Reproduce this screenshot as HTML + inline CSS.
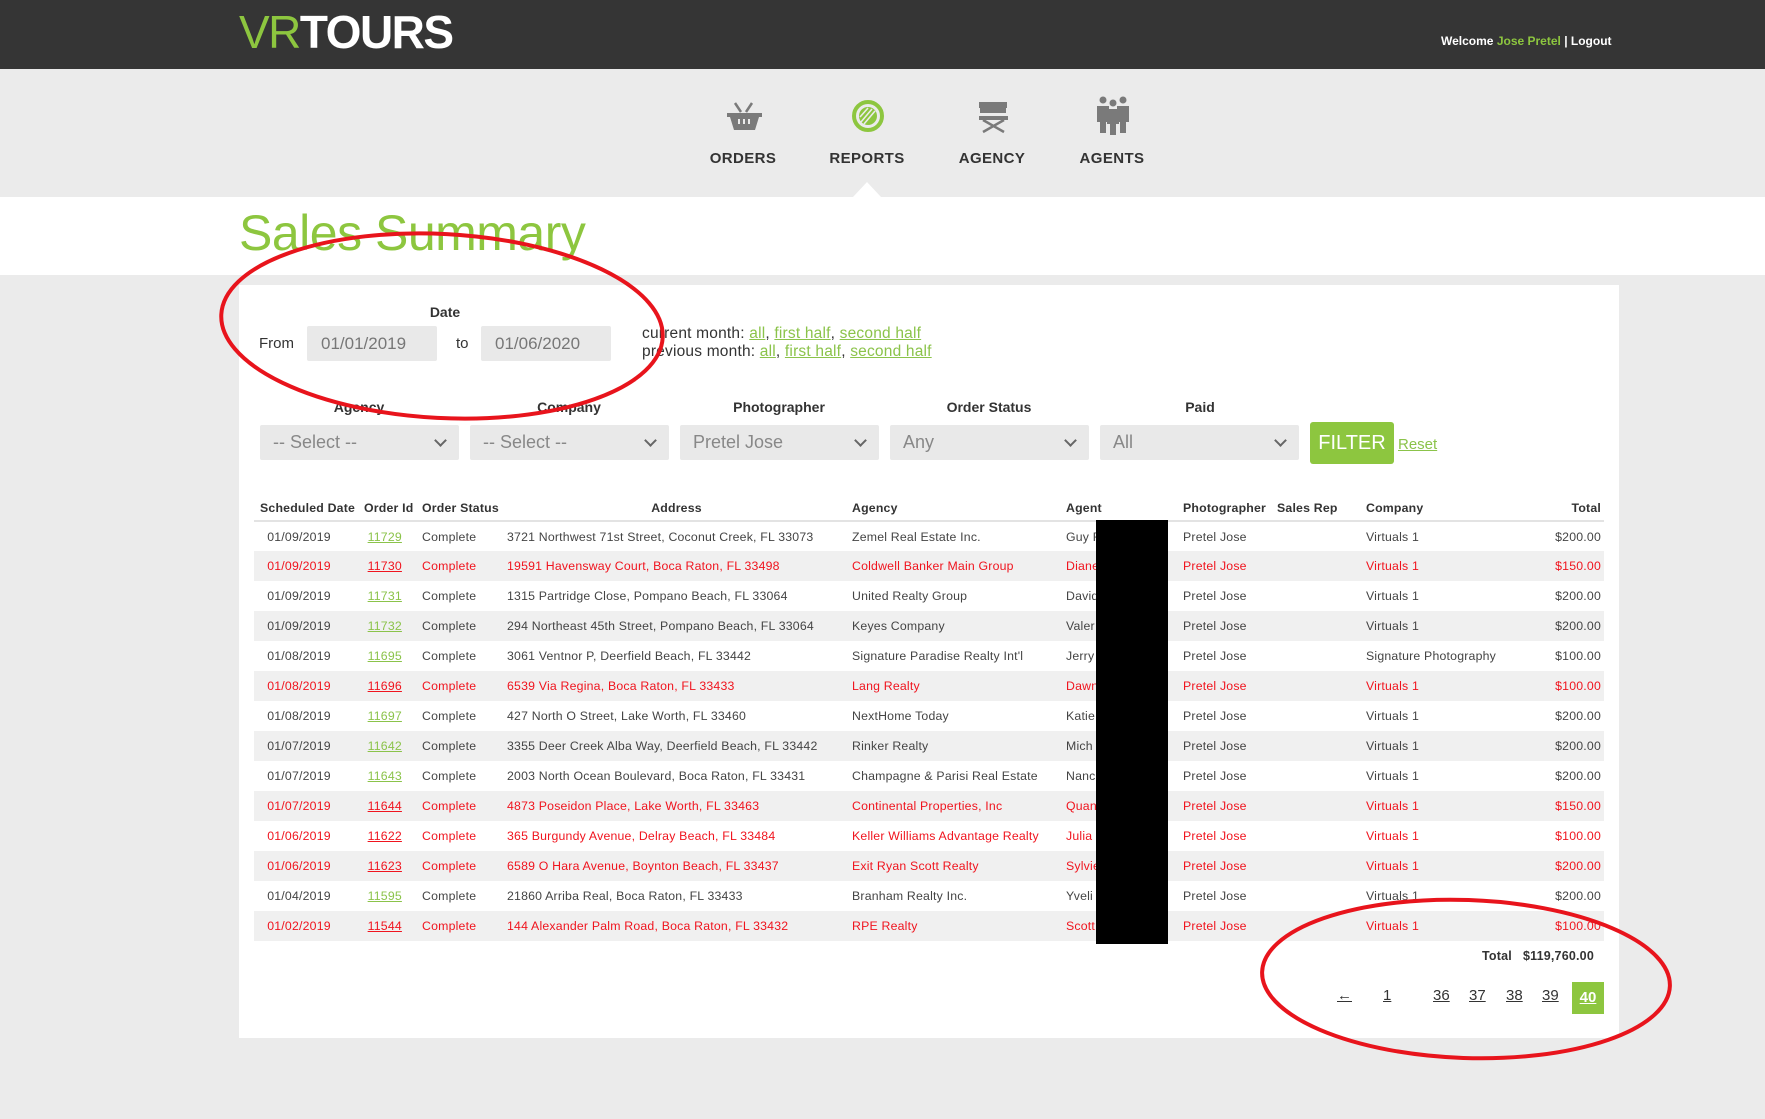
<!DOCTYPE html>
<html><head><meta charset="utf-8"><style>
*{margin:0;padding:0;box-sizing:border-box}
body{width:1765px;height:1119px;background:#ebebeb;font-family:"Liberation Sans",sans-serif;position:relative;overflow:hidden;color:#333}
.a{position:absolute;white-space:nowrap}
#hdr{position:absolute;left:0;top:0;width:1765px;height:69px;background:#353535}
.nav{position:absolute;top:150px;font-size:15px;font-weight:bold;letter-spacing:0.4px;color:#333;transform:translateX(-50%)}
.lbl{font-size:14px;font-weight:bold;color:#333;transform:translateX(-50%)}
.inp{position:absolute;background:#e9e9e9;border-radius:2px;color:#777;font-size:17px;padding-left:14px;line-height:35px}
.sel{position:absolute;top:425px;height:35px;width:199px;background:#e9e9e9;border-radius:2px;color:#888;font-size:18px;padding-left:13px;line-height:35px}
.sel:after{content:"";position:absolute;right:14px;top:11px;width:7px;height:7px;border-right:2px solid #666;border-bottom:2px solid #666;transform:rotate(45deg)}
.g{color:#8bc34a;text-decoration:underline}
table{position:absolute;left:254px;top:498px;width:1350px;border-collapse:collapse;font-size:12.3px;letter-spacing:0.2px}
th{font-weight:bold;text-align:left;height:23px;border-bottom:2px solid #e3e3e3;padding:0 0 2px 6px;font-size:12.3px;color:#333}
td{height:30px;padding:0 0 0 6px;color:#444;white-space:nowrap}
tr:nth-child(odd) td{background:#f0f0f0}
tr.r td{color:#f0141e}
td a{color:#8bc34a;text-decoration:underline}
tr.r td a{color:#f0141e}
.pg{position:absolute;top:987px;font-size:15px;color:#333;text-decoration:underline}
</style></head><body>
<div id="hdr"></div>
<div class="a" style="left:239px;top:5px;font-size:46px;line-height:54px;letter-spacing:-1.5px"><span style="color:#8dc63f">VR</span><span style="color:#fff;font-weight:bold">TOURS</span></div>
<div class="a" style="left:1441px;top:34px;font-size:12px;font-weight:bold;color:#fff">Welcome <span style="color:#8dc63f">Jose Pretel</span> | Logout</div>

<svg class="a" style="left:720px;top:95px" width="430" height="42" viewBox="720 95 430 42">
 <g fill="#7a7a7a">
  <path d="M735 103 L741 112 M752 103 L746 112" stroke="#7a7a7a" stroke-width="2.5" fill="none"/>
  <path d="M727 113 H762 V117 H759 L755 130 H734 L730 117 H727 Z"/>
  <rect x="738" y="119" width="2" height="5" fill="#ebebeb"/><rect x="743" y="119" width="2" height="5" fill="#ebebeb"/><rect x="748" y="119" width="2" height="5" fill="#ebebeb"/>
 </g>
 <circle cx="868" cy="116" r="14" fill="none" stroke="#8dc63f" stroke-width="4"/>
 <circle cx="868" cy="116" r="9" fill="#8dc63f"/>
 <path d="M861 122 L872 109 M864 124 L875 111 M860 117 L868 108" stroke="#ebebeb" stroke-width="1.6"/>
 <g fill="#7a7a7a">
  <rect x="980" y="102" width="26" height="11"/><rect x="979" y="102" width="2" height="6"/><rect x="1005" y="102" width="2" height="6"/>
  <rect x="979" y="116" width="29" height="4"/>
  <path d="M983 132 L1004 120 M983 120 L1004 132" stroke="#7a7a7a" stroke-width="2.5"/>
 </g>
 <g fill="#7a7a7a">
  <circle cx="1103" cy="100" r="3.5"/><circle cx="1113" cy="103" r="3.5"/><circle cx="1123" cy="100" r="3.5"/>
  <path d="M1097 106 H1109 V122 H1106 V133 H1100 V122 H1097 Z"/>
  <path d="M1117 106 H1129 V122 H1126 V133 H1120 V122 H1117 Z"/>
  <path d="M1107 109 H1119 V124 H1116 V135 H1110 V124 H1107 Z"/>
 </g>
</svg>
<div class="a nav" style="left:743px">ORDERS</div>
<div class="a nav" style="left:867px">REPORTS</div>
<div class="a nav" style="left:992px">AGENCY</div>
<div class="a nav" style="left:1112px">AGENTS</div>

<div class="a" style="left:0;top:197px;width:1765px;height:78px;background:#fff"></div>
<div class="a" style="left:853px;top:182px;width:0;height:0;border-left:14px solid transparent;border-right:14px solid transparent;border-bottom:15px solid #fff"></div>
<div class="a" style="left:239px;top:204px;font-size:50px;line-height:58px;color:#8dc63f;letter-spacing:-0.5px">Sales Summary</div>

<div class="a" style="left:239px;top:285px;width:1380px;height:753px;background:#fff"></div>

<div class="a lbl" style="left:445px;top:304px">Date</div>
<div class="a" style="left:259px;top:335px;font-size:15px">From</div>
<div class="inp" style="left:307px;top:326px;width:130px;height:35px">01/01/2019</div>
<div class="a" style="left:456px;top:335px;font-size:15px">to</div>
<div class="inp" style="left:481px;top:326px;width:130px;height:35px">01/06/2020</div>
<div class="a" style="left:642px;top:325px;font-size:15.5px;line-height:18px;color:#333;letter-spacing:0.2px">current month: <span class="g">all</span>, <span class="g">first half</span>, <span class="g">second half</span><br>previous month: <span class="g">all</span>, <span class="g">first half</span>, <span class="g">second half</span></div>

<div class="a lbl" style="left:359px;top:399px">Agency</div>
<div class="a lbl" style="left:569px;top:399px">Company</div>
<div class="a lbl" style="left:779px;top:399px">Photographer</div>
<div class="a lbl" style="left:989px;top:399px">Order Status</div>
<div class="a lbl" style="left:1200px;top:399px">Paid</div>
<div class="sel" style="left:260px">-- Select --</div>
<div class="sel" style="left:470px">-- Select --</div>
<div class="sel" style="left:680px">Pretel Jose</div>
<div class="sel" style="left:890px">Any</div>
<div class="sel" style="left:1100px">All</div>
<div class="a" style="left:1310px;top:422px;width:84px;height:42px;background:#8dc63f;border-radius:3px;color:#fff;font-size:20px;line-height:42px;text-align:center">FILTER</div>
<div class="a g" style="left:1398px;top:436px;font-size:15px">Reset</div>

<table>
<tr style="background:none"><th style="width:104px;background:#fff">Scheduled Date</th><th style="width:58px;background:#fff">Order Id</th><th style="width:85px;background:#fff">Order Status</th><th style="width:345px;text-align:center;background:#fff">Address</th><th style="width:214px;background:#fff">Agency</th><th style="width:117px;background:#fff">Agent</th><th style="width:94px;background:#fff">Photographer</th><th style="width:89px;background:#fff">Sales Rep</th><th style="width:170px;background:#fff">Company</th><th style="text-align:right;padding-right:3px;background:#fff">Total</th></tr>
<tr><td>&nbsp;&nbsp;01/09/2019</td><td>&nbsp;<a>11729</a></td><td>Complete</td><td>3721 Northwest 71st Street, Coconut Creek, FL 33073</td><td>Zemel Real Estate Inc.</td><td>Guy F</td><td>Pretel Jose</td><td></td><td>Virtuals 1</td><td style="text-align:right;padding-right:3px">$200.00</td></tr>
<tr class="r"><td>&nbsp;&nbsp;01/09/2019</td><td>&nbsp;<a>11730</a></td><td>Complete</td><td>19591 Havensway Court, Boca Raton, FL 33498</td><td>Coldwell Banker Main Group</td><td>Diane</td><td>Pretel Jose</td><td></td><td>Virtuals 1</td><td style="text-align:right;padding-right:3px">$150.00</td></tr>
<tr><td>&nbsp;&nbsp;01/09/2019</td><td>&nbsp;<a>11731</a></td><td>Complete</td><td>1315 Partridge Close, Pompano Beach, FL 33064</td><td>United Realty Group</td><td>David</td><td>Pretel Jose</td><td></td><td>Virtuals 1</td><td style="text-align:right;padding-right:3px">$200.00</td></tr>
<tr><td>&nbsp;&nbsp;01/09/2019</td><td>&nbsp;<a>11732</a></td><td>Complete</td><td>294 Northeast 45th Street, Pompano Beach, FL 33064</td><td>Keyes Company</td><td>Valer</td><td>Pretel Jose</td><td></td><td>Virtuals 1</td><td style="text-align:right;padding-right:3px">$200.00</td></tr>
<tr><td>&nbsp;&nbsp;01/08/2019</td><td>&nbsp;<a>11695</a></td><td>Complete</td><td>3061 Ventnor P, Deerfield Beach, FL 33442</td><td>Signature Paradise Realty Int'l</td><td>Jerry</td><td>Pretel Jose</td><td></td><td>Signature Photography</td><td style="text-align:right;padding-right:3px">$100.00</td></tr>
<tr class="r"><td>&nbsp;&nbsp;01/08/2019</td><td>&nbsp;<a>11696</a></td><td>Complete</td><td>6539 Via Regina, Boca Raton, FL 33433</td><td>Lang Realty</td><td>Dawn</td><td>Pretel Jose</td><td></td><td>Virtuals 1</td><td style="text-align:right;padding-right:3px">$100.00</td></tr>
<tr><td>&nbsp;&nbsp;01/08/2019</td><td>&nbsp;<a>11697</a></td><td>Complete</td><td>427 North O Street, Lake Worth, FL 33460</td><td>NextHome Today</td><td>Katie</td><td>Pretel Jose</td><td></td><td>Virtuals 1</td><td style="text-align:right;padding-right:3px">$200.00</td></tr>
<tr><td>&nbsp;&nbsp;01/07/2019</td><td>&nbsp;<a>11642</a></td><td>Complete</td><td>3355 Deer Creek Alba Way, Deerfield Beach, FL 33442</td><td>Rinker Realty</td><td>Mich</td><td>Pretel Jose</td><td></td><td>Virtuals 1</td><td style="text-align:right;padding-right:3px">$200.00</td></tr>
<tr><td>&nbsp;&nbsp;01/07/2019</td><td>&nbsp;<a>11643</a></td><td>Complete</td><td>2003 North Ocean Boulevard, Boca Raton, FL 33431</td><td>Champagne &amp; Parisi Real Estate</td><td>Nanc</td><td>Pretel Jose</td><td></td><td>Virtuals 1</td><td style="text-align:right;padding-right:3px">$200.00</td></tr>
<tr class="r"><td>&nbsp;&nbsp;01/07/2019</td><td>&nbsp;<a>11644</a></td><td>Complete</td><td>4873 Poseidon Place, Lake Worth, FL 33463</td><td>Continental Properties, Inc</td><td>Quan</td><td>Pretel Jose</td><td></td><td>Virtuals 1</td><td style="text-align:right;padding-right:3px">$150.00</td></tr>
<tr class="r"><td>&nbsp;&nbsp;01/06/2019</td><td>&nbsp;<a>11622</a></td><td>Complete</td><td>365 Burgundy Avenue, Delray Beach, FL 33484</td><td>Keller Williams Advantage Realty</td><td>Julia</td><td>Pretel Jose</td><td></td><td>Virtuals 1</td><td style="text-align:right;padding-right:3px">$100.00</td></tr>
<tr class="r"><td>&nbsp;&nbsp;01/06/2019</td><td>&nbsp;<a>11623</a></td><td>Complete</td><td>6589 O Hara Avenue, Boynton Beach, FL 33437</td><td>Exit Ryan Scott Realty</td><td>Sylvie</td><td>Pretel Jose</td><td></td><td>Virtuals 1</td><td style="text-align:right;padding-right:3px">$200.00</td></tr>
<tr><td>&nbsp;&nbsp;01/04/2019</td><td>&nbsp;<a>11595</a></td><td>Complete</td><td>21860 Arriba Real, Boca Raton, FL 33433</td><td>Branham Realty Inc.</td><td>Yveli</td><td>Pretel Jose</td><td></td><td>Virtuals 1</td><td style="text-align:right;padding-right:3px">$200.00</td></tr>
<tr class="r"><td>&nbsp;&nbsp;01/02/2019</td><td>&nbsp;<a>11544</a></td><td>Complete</td><td>144 Alexander Palm Road, Boca Raton, FL 33432</td><td>RPE Realty</td><td>Scott</td><td>Pretel Jose</td><td></td><td>Virtuals 1</td><td style="text-align:right;padding-right:3px">$100.00</td></tr>
</table>
<div class="a" style="left:1096px;top:520px;width:72px;height:424px;background:#000"></div>

<div class="a" style="left:1482px;top:949px;font-size:12.5px;font-weight:bold;color:#333;letter-spacing:0.2px">Total&nbsp;&nbsp;&nbsp;$119,760.00</div>
<div class="pg" style="left:1337px">&larr;</div>
<div class="pg" style="left:1383px">1</div>
<div class="pg" style="left:1433px">36</div>
<div class="pg" style="left:1469px">37</div>
<div class="pg" style="left:1506px">38</div>
<div class="pg" style="left:1542px">39</div>
<div class="a" style="left:1572px;top:982px;width:32px;height:32px;background:#8dc63f;color:#fff;font-size:15px;font-weight:bold;line-height:32px;text-align:center;text-decoration:underline">40</div>

<svg class="a" style="left:0;top:0" width="1765" height="1119">
 <ellipse cx="442" cy="326" rx="221" ry="92" transform="rotate(3 442 326)" fill="none" stroke="#e8141c" stroke-width="4"/>
 <ellipse cx="1466" cy="979" rx="204" ry="79" transform="rotate(2 1466 979)" fill="none" stroke="#e8141c" stroke-width="4"/>
</svg>
</body></html>
